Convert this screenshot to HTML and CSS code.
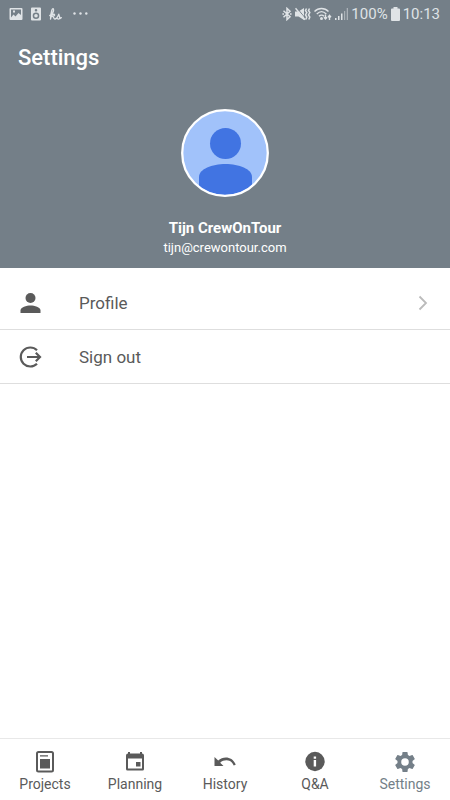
FILE: index.html
```html
<!DOCTYPE html>
<html lang="en">
<head>
<meta charset="utf-8">
<meta name="viewport" content="width=device-width, initial-scale=1">
<title>Settings</title>
<link rel="stylesheet" href="styles.css">
</head>
<body>
<div class="app">
  <header class="header">
    <div class="status">
      <div class="status-group notices">
        <svg width="14" height="14" viewBox="0 0 14 14" aria-hidden="true"><path fill="currentColor" fill-rule="evenodd" d="M1.500 1h11q1 0 1 1v10q0 1-1 1h-11q-1 0-1-1V2q0-1 1-1zM2 2.500v8l2.500-3 2 2L9.500 6 12 8V2.500zM4 3.500h2v2H4z"/></svg>
        <svg width="10" height="14" viewBox="0 0 10 14" aria-hidden="true"><path fill="currentColor" fill-rule="evenodd" d="M1 .5h8q1 0 1 1v11q0 1-1 1H1q-1 0-1-1v-11q0-1 1-1zM5 2a1.300 1.300 0 1 0 0 2.600A1.300 1.300 0 0 0 5 2zM5 5.500a3.300 3.300 0 1 0 0 6.600 3.300 3.300 0 0 0 0-6.600zM5 7a1.800 1.800 0 1 1 0 3.600A1.800 1.800 0 0 1 5 7z"/></svg>
        <svg width="13" height="14" viewBox="0 0 13 14" aria-hidden="true"><path fill="none" stroke="currentColor" stroke-width="1.300" stroke-linecap="round" stroke-linejoin="round" d="M.8 8.500C3.500 6.500 5 3.500 4.300 1.800 3.300.8 2 4 1.500 12c.7-3 2-4.800 3.300-4.800 1.600.4.500 2-1.500 2.200 1.800.3 1.300 2.600 2.500 2.600 1.800 0 3-2.300 4-4.800.2 2 1.500 2.800.7 4.200-.6 1.100-2 .8-2.200 0M10.800 11.600l1.500-1"/></svg>
        <svg class="dots" width="15" height="14" viewBox="0 0 15 14" aria-hidden="true"><g fill="currentColor"><circle cx="1.500" cy="6.500" r="1.200"/><circle cx="7.500" cy="6.500" r="1.200"/><circle cx="13.300" cy="6.500" r="1.200"/></g></svg>
      </div>
      <div class="status-group">
        <svg width="10" height="14" viewBox="0 0 10 14" aria-hidden="true"><path fill="none" stroke="currentColor" stroke-width="1.500" d="M1.500 3.800 8 9.800 5 12.600V1.400L8 4.200 1.500 10.200M.4 7h1.600M8 7h1.600"/></svg>
        <svg width="16" height="14" viewBox="0 0 16 14" aria-hidden="true"><path fill="currentColor" d="M0 4.500h3.500L9 1v12L3.500 9.500H0z"/><path stroke="#747f88" stroke-width="1" d="m1.800.8 9 11"/><path fill="none" stroke="currentColor" stroke-width="1.500" d="m.5 1.300 9.500 11.500M11.500 1.500l-1 2 1.300 2-1.300 2.500 1.300 2-1 2.500M14.500 1.500l-1 2 1.300 2-1.300 2.500 1.300 2-1 2.500"/></svg>
        <svg width="18" height="14" viewBox="0 0 18 14" aria-hidden="true"><g fill="none" stroke="currentColor" stroke-width="1.400"><path d="M.5 4.500c4-4 10-4 14 0M2.800 7c3-3 6.500-3 9.500 0M5 9.300c1.600-1.600 3.600-1.600 5 0"/><path d="M11.500 7.500V12m-1.500-1.800 1.500 1.800 1.500-1.800M15.500 13V8.500M14 10.200l1.500-1.800 1.500 1.800"/></g><circle cx="7.500" cy="11.500" r="1.500" fill="currentColor"/></svg>
        <svg width="13" height="14" viewBox="0 0 13 14" aria-hidden="true"><path fill="currentColor" d="M0 11h1.500v2H0zM3 9h1.500v4H3zM6 6.500h1.500V13H6z"/><path fill="currentColor" opacity=".5" d="M9 4h1.200v9H9zM11.700 1H13v12h-1.300z"/></svg>
        <span>100%</span>
        <svg width="9" height="14" viewBox="0 0 9 14" aria-hidden="true"><path fill="currentColor" d="M2.500 0h4v1.500H8q1 0 1 1V13q0 1-1 1H1q-1 0-1-1V2.500q0-1 1-1h1.500z"/></svg>
        <span>10:13</span>
      </div>
    </div>
    <h1 class="title">Settings</h1>
    <section class="account">
      <svg class="avatar" viewBox="0 0 88 88" role="img" aria-label="Avatar"><defs><clipPath id="face"><circle cx="44" cy="44" r="42"/></clipPath></defs><circle cx="44" cy="44" r="43" fill="#a1c2fa"/><g fill="#4174e2" clip-path="url(#face)"><circle cx="44.500" cy="34.500" r="15.500"/><path d="M18 88V68c0-8 13-13 26.500-13S71 60 71 68v20z"/></g><circle cx="44" cy="44" r="42.800" fill="none" stroke="#fff" stroke-width="2.300"/></svg>
      <h2 class="name">Tijn CrewOnTour</h2>
      <p class="email">tijn@crewontour.com</p>
    </section>
  </header>
  <main class="list">
    <button class="row" type="button">
      <svg width="25" height="24" viewBox="0 0 25 24" aria-hidden="true"><g fill="currentColor"><circle cx="12.500" cy="7" r="5"/><path d="M2.500 22v-2.500c0-3.500 6-5 10-5s10 1.500 10 5V22z"/></g></svg>
      <span class="row-label">Profile</span>
      <svg class="chevron" width="10" height="16" viewBox="0 0 10 16" aria-hidden="true"><path fill="none" stroke="currentColor" stroke-width="1.800" d="m1.500 1.500 6.500 6.500-6.500 6.500"/></svg>
    </button>
    <button class="row" type="button">
      <svg width="25" height="24" viewBox="0 0 25 24" aria-hidden="true"><g fill="none" stroke="currentColor" stroke-width="2.200"><path d="M19 5.300a9.500 9.500 0 1 0 0 13.400M9 12h12.500"/><path d="m17.800 7.800 4.200 4.200-4.200 4.200"/></g></svg>
      <span class="row-label">Sign out</span>
    </button>
  </main>
  <nav class="tabs" aria-label="Main">
    <a class="tab" href="#projects">
      <svg width="22" height="22" viewBox="0 0 22 22" aria-hidden="true"><rect x="3" y="1" width="16" height="19.500" rx="1.500" fill="none" stroke="currentColor" stroke-width="2"/><path fill="currentColor" d="M6 4.200h8v1.300H6zM6 8h10v9.500H6z"/></svg>
      <span>Projects</span>
    </a>
    <a class="tab" href="#planning">
      <svg width="22" height="22" viewBox="0 0 22 22" aria-hidden="true"><path fill="currentColor" fill-rule="evenodd" d="M4 1h2v1.500h10V1h2v1.500q2 0 2 2V18q0 1.500-1.500 1.500h-15Q2 19.500 2 18V4.500q0-2 2-2zM4 7.500v10h14v-10zM12 11h4.500v4.500H12z"/></svg>
      <span>Planning</span>
    </a>
    <a class="tab" href="#history">
      <svg width="22" height="22" viewBox="0 0 22 22" aria-hidden="true"><path fill="currentColor" d="M.5 6v9h9L6.200 11.700c4-3.500 11-3.500 13.500 2.800l2-.7C19 5.500 9.500 4.500 4.200 9.500z"/></svg>
      <span>History</span>
    </a>
    <a class="tab" href="#questions">
      <svg width="22" height="22" viewBox="0 0 22 22" aria-hidden="true"><circle cx="11" cy="10.500" r="9.700" fill="currentColor"/><path fill="#fff" d="M9.700 5.500h2.400v2.300H9.700zM9.700 9h2.400v6.500H9.700z"/></svg>
      <span>Q&amp;A</span>
    </a>
    <a class="tab current" href="#settings" aria-current="page">
      <svg width="22" height="22" viewBox="1.500 1.500 21 21" aria-hidden="true"><path fill="currentColor" d="M19.140 12.940c.04-.3.060-.61.060-.94 0-.32-.02-.64-.07-.94l2.030-1.580a.49.49 0 0 0 .12-.61l-1.920-3.320a.49.49 0 0 0-.59-.22l-2.390.96c-.5-.38-1.030-.7-1.620-.94l-.36-2.540a.48.48 0 0 0-.48-.41h-3.840c-.24 0-.43.17-.47.41l-.36 2.540c-.59.24-1.130.57-1.620.94l-2.390-.96a.48.48 0 0 0-.59.22L2.740 8.870a.48.48 0 0 0 .12.610l2.030 1.580c-.05.3-.09.63-.09.940s.02.64.07.94l-2.030 1.580a.49.49 0 0 0-.12.610l1.920 3.320c.12.220.37.290.59.220l2.390-.96c.5.380 1.030.7 1.620.94l.36 2.540c.05.240.24.410.48.410h3.840c.24 0 .44-.17.470-.41l.36-2.540c.59-.24 1.130-.56 1.620-.94l2.390.96c.22.080.47 0 .59-.22l1.920-3.320a.48.48 0 0 0-.12-.61zM12 15.600a3.600 3.600 0 1 1 0-7.200 3.600 3.600 0 0 1 0 7.200z"/></svg>
      <span>Settings</span>
    </a>
  </nav>
</div>
</body>
</html>
```

FILE: styles.css
```css
* { box-sizing: border-box; }

body {
  margin: 0;
  background: #fff;
  color: #5a5a5a;
  font-family: Roboto, "Liberation Sans", sans-serif;
}

h1, h2, p { margin: 0; }

svg { display: block; flex: none; }

.app {
  display: flex;
  flex-direction: column;
  min-height: 100vh;
}

.header {
  background: #747f88;
  color: #fff;
  padding-bottom: 10px;
}

.status {
  display: flex;
  justify-content: space-between;
  padding: 4px 10px 4px 9px;
  color: #dfe3e6;
  font-size: 15px;
  line-height: 20px;
}

.status-group {
  display: flex;
  align-items: center;
  gap: 3px;
}

.notices { gap: 8px; }

.dots { margin-left: 3px; }

.title {
  padding: 15px 18px 13px;
  font-size: 22px;
  font-weight: 500;
  line-height: 30px;
}

.account {
  display: flex;
  flex-direction: column;
  align-items: center;
  padding-top: 23px;
}

.avatar {
  width: 88px;
  height: 88px;
  margin-bottom: 21px;
}

.name {
  font-size: 15px;
  font-weight: 700;
  line-height: 20px;
}

.email {
  font-size: 13px;
  line-height: 20px;
}

.list {
  flex: 1;
  padding-top: 8px;
}

.row {
  display: flex;
  align-items: center;
  gap: 36px;
  width: 100%;
  padding: 15px 22px 14px 18px;
  border: 0;
  border-bottom: 1px solid #dedede;
  background: none;
  color: inherit;
  font: inherit;
  font-size: 17px;
  line-height: 24px;
  text-align: left;
}

.row-label { flex: 1; }

.chevron { color: #bbb; }

.tabs {
  display: grid;
  grid-template-columns: repeat(5, 1fr);
  border-top: 1px solid #e8e8e8;
  padding: 12px 0 7px;
}

.tab {
  display: flex;
  flex-direction: column;
  align-items: center;
  gap: 2px;
  color: #5a5a5a;
  font-size: 14px;
  line-height: 18px;
  text-decoration: none;
}

.current { color: #747f88; }
```
